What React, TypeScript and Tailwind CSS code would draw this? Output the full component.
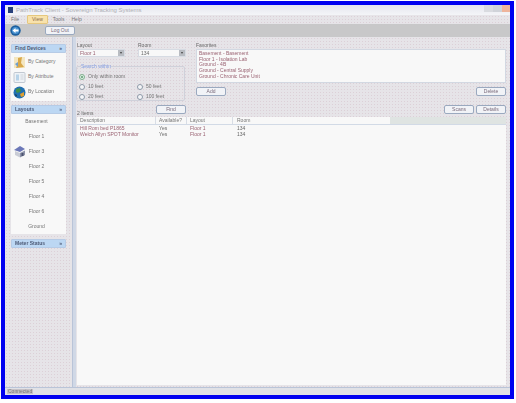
const dots = 'bg-[#e6e4e8] bg-[radial-gradient(#dcd0d7_0.7px,transparent_0.8px)] bg-[length:3px_3px]';
const btn = 'h-[9px] w-[30px] rounded-[2px] border border-[#9aa9bf] bg-[#f1f3f7] text-[5px] leading-[7px] text-[#7a6a7a] text-center';

const floors = ['Basement', 'Floor 1', 'Floor 3', 'Floor 2', 'Floor 5', 'Floor 4', 'Floor 6', 'Ground'];
const favourites = [
  'Basement - Basement',
  'Floor 1 - Isolation Lab',
  'Ground - 4B',
  'Ground - Central Supply',
  'Ground - Chronic Care Unit',
];
const items = [
  { name: 'Hill Rom bed P1865', available: 'Yes', layout: 'Floor 1', room: '134' },
  { name: 'Welch Allyn SPOT Monitor', available: 'Yes', layout: 'Floor 1', room: '134' },
];

function PanelHeader({ title }: { title: string }) {
  return (
    <div className="flex h-[9px] items-center justify-between rounded-[1px] border border-[#b6cbe6] bg-[#bcd7f3] px-[3px] text-[5px] font-bold text-[#4d5a76]">
      <span>{title}</span>
      <span className="text-[5px] leading-none">»</span>
    </div>
  );
}

function CategoryIcon() {
  return (
    <svg width="13" height="13" viewBox="0 0 13 13">
      <rect x="1" y="1" width="11" height="11" fill="#f3e6c0" />
      <path d="M5 2 L9 1 L8 7 L11 11 L3 12 L5 7 Z" fill="#d9a84a" />
      <path d="M2 8 L5 6 L5 11 Z" fill="#6f9fd0" />
    </svg>
  );
}

function AttributeIcon() {
  return (
    <svg width="13" height="13" viewBox="0 0 13 13">
      <rect x="1" y="1.5" width="11" height="10" rx="1" fill="#eef2f6" stroke="#b4bcc6" strokeWidth="0.8" />
      <rect x="3" y="3.5" width="3" height="6" fill="#b8d3e8" />
      <path d="M7.5 4h3M7.5 6h3M7.5 8h3" stroke="#c2c8cf" strokeWidth="0.7" />
    </svg>
  );
}

function GlobeIcon() {
  return (
    <svg width="13" height="13" viewBox="0 0 13 13">
      <circle cx="6.5" cy="6.5" r="6" fill="#1f6fb0" />
      <path d="M3 3 L7 2 L8 5 L5 7 L3 6 Z" fill="#3f8f4a" />
      <path d="M7 8 L11 6 L11 10 L8 11 Z" fill="#e0a030" />
      <path d="M2 8 L4 9 L3 11 Z" fill="#17324f" />
    </svg>
  );
}

function BuildingIcon() {
  return (
    <svg width="13" height="13" viewBox="0 0 13 13">
      <path d="M1 5 L7 1 L12 4 L7 7 Z" fill="#6c78b8" />
      <path d="M2 6 L7 8 L7 12.5 L2 10 Z" fill="#c9ccd6" />
      <path d="M7 8 L12 5.5 L12 10 L7 12.5 Z" fill="#8d93a8" />
      <rect x="8.5" y="8" width="2" height="3" fill="#4b5270" />
    </svg>
  );
}

function BackIcon() {
  return (
    <svg width="11" height="11" viewBox="0 0 11 11">
      <circle cx="5.5" cy="5.5" r="5.2" fill="#1d5f9e" />
      <circle cx="5.5" cy="5.5" r="3.6" fill="#4b94d2" />
      <path d="M2.5 5.5 L5.5 3 L5.5 4.6 L8.5 4.6 L8.5 6.4 L5.5 6.4 L5.5 8 Z" fill="#fff" />
    </svg>
  );
}

function Select({ value, tint }: { value: string; tint?: boolean }) {
  return (
    <div className="flex h-[8px] w-[48px] items-center justify-between border border-[#d6dbe3] bg-[#f8f8f8] pl-[2px] text-[5px]">
      <span className={tint ? 'text-[#9a6272]' : 'text-[#6a6a6a]'}>{value}</span>
      <span className="flex h-full w-[6px] items-center justify-center bg-[#b9bcc2] text-[4px] leading-none text-[#444]">▾</span>
    </div>
  );
}

function Radio({ label, checked }: { label: string; checked?: boolean }) {
  return (
    <div className="flex h-[10px] items-center gap-[3px] text-[5px] text-[#747474]">
      <span className={'flex size-[6px] items-center justify-center rounded-full border ' + (checked ? 'border-[#7fb08f] bg-[#dff0e4]' : 'border-[#8d99a8] bg-[#f4f5f7]')}>
        {checked && <span className="size-[2px] rounded-full bg-[#5d9a70]" />}
      </span>
      {label}
    </div>
  );
}

export default function App() {
  return (
    <div className="h-[403px] w-[516px] overflow-hidden bg-white pl-[1px] pt-[1px] font-['Liberation_Sans',sans-serif]">
      <div className="h-[398px] w-[513px] border-[4px] border-[#0000f0]">
        <div className="flex h-[390px] w-[505px] flex-col blur-[0.5px]">
          {/* title bar */}
          <div className="flex h-[10px] shrink-0 items-center bg-gradient-to-b from-[#e4e6ee] to-[#f4f5f8] pl-[3px]">
            <span className="h-[6px] w-[5px] bg-[#28407a]" />
            <span className="ml-[3px] text-[6px] text-[#b0b0b6]">PathTrack Client - Sovereign Tracking Systems</span>
            <div className="ml-auto flex h-full items-start">
              <span className="h-[7px] w-[9px] bg-[#d9dbe0]" />
              <span className="h-[7px] w-[9px] bg-[#d0d3d9]" />
              <span className="h-[7px] w-[8px] bg-[#eeb49c]" />
            </div>
          </div>
          {/* menu */}
          <div className={'flex h-[9px] shrink-0 items-center gap-[5px] pl-[3px] text-[5px] text-[#777] ' + dots}>
            <span className="px-[3px]">File</span>
            <span className="rounded-[1px] border border-[#e5c77e] bg-[#f8e2ac] px-[4px] text-[#8a6a4a]">View</span>
            <span>Tools</span>
            <span className="pl-[2px]">Help</span>
          </div>
          {/* toolbar */}
          <div className="flex h-[13px] shrink-0 items-center bg-[#c8c8c9] pl-[5px]">
            <BackIcon />
            <button className={btn + ' ml-[24px]'}>Log Out</button>
          </div>
          {/* body */}
          <div className="flex min-h-0 flex-1">
            <div className={'w-[68px] shrink-0 border-r border-[#b9c4d8] px-[6px] pt-[7px] ' + dots}>
              <PanelHeader title="Find Devices" />
              <div className="flex h-[48px] flex-col justify-center gap-[2px] bg-[#f8f8f8] pl-[2px] text-[5px] text-[#777]">
                <div className="flex items-center gap-[2px]"><CategoryIcon />By Category</div>
                <div className="flex items-center gap-[2px]"><AttributeIcon />By Attribute</div>
                <div className="flex items-center gap-[2px]"><GlobeIcon />By Location</div>
              </div>
              <div className="mt-[4px]">
                <PanelHeader title="Layouts" />
              </div>
              <div className="flex h-[120px] flex-col justify-center bg-[#f8f8f8] text-[5px] text-[#777]">
                {floors.map((f) => (
                  <div key={f} className="relative flex h-[15px] items-center justify-center pr-[4px]">
                    {f === 'Floor 3' && <span className="absolute left-[2px] top-[1px]"><BuildingIcon /></span>}
                    {f}
                  </div>
                ))}
              </div>
              <div className="mt-[5px]">
                <PanelHeader title="Meter Status" />
              </div>
            </div>
            <div className="w-[3px] shrink-0 bg-[#d0d8e6]" />
            <div className={'flex min-w-0 flex-1 flex-col pr-[4px] pt-[5px] ' + dots}>
              <div className="flex h-[63px] shrink-0 gap-[11px]">
                <div className="w-[109px] shrink-0">
                  <div className="flex gap-[13px] pl-[1px] text-[5px] leading-[7px] text-[#666]">
                    <div>
                      <div className="w-[48px]">Layout</div>
                      <Select value="Floor 1" tint />
                    </div>
                    <div>
                      <div className="w-[48px]">Room</div>
                      <Select value="134" />
                    </div>
                  </div>
                  <fieldset className="mt-[7px] h-[37px] rounded-[2px] border border-[#cfd1da] pl-[2px]">
                    <legend className="ml-[2px] text-[5px] leading-[5px] text-[#7f9be0]">Search within</legend>
                    <div className="mt-[3px] grid grid-cols-[58px_1fr]">
                      <div className="col-span-2"><Radio label="Only within room" checked /></div>
                      <Radio label="10 feet" />
                      <Radio label="50 feet" />
                      <Radio label="20 feet" />
                      <Radio label="100 feet" />
                    </div>
                  </fieldset>
                </div>
                <div className="flex min-w-0 flex-1 flex-col">
                  <div className="text-[5px] leading-[7px] text-[#666]">Favorites</div>
                  <div className="h-[34px] border border-[#d2d8e2] bg-[#f8f8f8] pl-[2px] pt-[1px] text-[5px] leading-[5.7px] text-[#9a6272]">
                    {favourites.map((f) => <div key={f}>{f}</div>)}
                  </div>
                  <div className="mt-[4px] flex justify-between">
                    <button className={btn}>Add</button>
                    <button className={btn}>Delete</button>
                  </div>
                </div>
              </div>
              <div className="flex h-[12px] shrink-0 items-end justify-between pb-[1px] pl-[1px]">
                <div className="flex flex-1 items-end justify-between">
                  <span className="text-[5px] leading-[6px] text-[#666]">2 Items</span>
                  <button className={btn + ' mb-[2px] mr-[258px]'}>Find</button>
                </div>
                <div className="mb-[2px] flex gap-[2px]">
                  <button className={btn}>Scans</button>
                  <button className={btn}>Details</button>
                </div>
              </div>
              <div className="ml-[1px] flex min-h-0 flex-1 flex-col">
                <div className="flex h-[7px] shrink-0 bg-[#dfe4e2] text-[5px] leading-[7px] text-[#777]">
                  <div className="flex w-[313px] bg-[#f8f8f8]">
                    <div className="w-[79px] border-r border-[#d8dde5] pl-[3px]">Description</div>
                    <div className="w-[31px] border-r border-[#d8dde5] pl-[3px]">Available?</div>
                    <div className="w-[46px] border-r border-[#d8dde5] pl-[3px]">Layout</div>
                    <div className="pl-[4px]">Room</div>
                  </div>
                </div>
                <div className="mb-[2px] flex-1 border-t border-[#d2dae6] bg-[#f8f8f8] text-[5px] leading-[6px]">
                  {items.map((it) => (
                    <div key={it.name} className="flex">
                      <div className="w-[79px] pl-[3px] text-[#9a6272]">{it.name}</div>
                      <div className="w-[31px] pl-[3px] text-[#666]">{it.available}</div>
                      <div className="w-[46px] pl-[3px] text-[#9a6272]">{it.layout}</div>
                      <div className="pl-[4px] text-[#666]">{it.room}</div>
                    </div>
                  ))}
                </div>
              </div>
            </div>
          </div>
          {/* status bar */}
          <div className="flex h-[8px] shrink-0 items-center border-t border-[#b9c4d8] bg-[#e0e1e6] pl-[2px]">
            <span className="bg-[#c6c1c6] px-px text-[5px] leading-[5px] text-[#777]">Connected</span>
          </div>
        </div>
      </div>
    </div>
  );
}
